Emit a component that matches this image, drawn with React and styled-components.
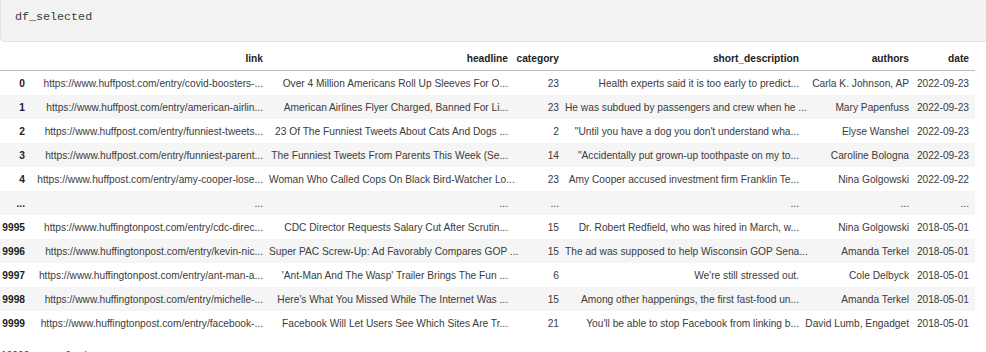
import styled, { createGlobalStyle } from "styled-components";

const GlobalStyle = createGlobalStyle`
  body {
    margin: 0;
    background: #ffffff;
    overflow: hidden;
    font-family: "Liberation Sans", Arial, sans-serif;
  }
`;

const CodeCell = styled.div`
  height: 42px;
  background-color: #f3f3f3;
  border-left: 1px solid #e2e2e2;
  border-bottom: 1px solid #e2e2e2;
  border-bottom-left-radius: 5px;
  box-sizing: border-box;
  padding: 10px 0 0 14px;
`;

const Code = styled.pre`
  margin: 0;
  font-family: "Liberation Mono", "DejaVu Sans Mono", monospace;
  font-size: 11.7px;
  line-height: 14px;
  color: #3b3b3b;
`;

const Output = styled.div`
  padding-top: 5px;
`;

const Table = styled.table`
  border-collapse: collapse;
  table-layout: fixed;
  width: 975px;
  font-size: 10.2px;
  color: #3b3b3b;
`;

const HeadCell = styled.th`
  height: 23px;
  padding: 0 6px 0 0;
  text-align: right;
  font-weight: 700;
  color: #222222;
  white-space: nowrap;
  border-bottom: 1px solid #bdbdbd;
`;

const Row = styled.tr`
  background-color: ${(p) => (p.$striped ? "#f5f5f5" : "#ffffff")};
`;

const IndexCell = styled.th`
  height: 24px;
  padding: 0 6px 0 0;
  text-align: right;
  font-weight: 700;
  color: #222222;
  white-space: nowrap;
`;

const Cell = styled.td`
  height: 24px;
  padding: 0 6px 0 0;
  text-align: right;
  white-space: nowrap;
`;

const Footer = styled.p`
  margin: 15px 0 0 1px;
  font-size: 10.2px;
  color: #3b3b3b;
`;

const columns = [
  { name: "", width: 31 },
  { name: "link", width: 238 },
  { name: "headline", width: 245 },
  { name: "category", width: 51 },
  { name: "short_description", width: 240 },
  { name: "authors", width: 110 },
  { name: "date", width: 60 },
];

const rows = [
  ["0", "https://www.huffpost.com/entry/covid-boosters-...", "Over 4 Million Americans Roll Up Sleeves For O...", "23", "Health experts said it is too early to predict...", "Carla K. Johnson, AP", "2022-09-23"],
  ["1", "https://www.huffpost.com/entry/american-airlin...", "American Airlines Flyer Charged, Banned For Li...", "23", "He was subdued by passengers and crew when he ...", "Mary Papenfuss", "2022-09-23"],
  ["2", "https://www.huffpost.com/entry/funniest-tweets...", "23 Of The Funniest Tweets About Cats And Dogs ...", "2", "\"Until you have a dog you don't understand wha...", "Elyse Wanshel", "2022-09-23"],
  ["3", "https://www.huffpost.com/entry/funniest-parent...", "The Funniest Tweets From Parents This Week (Se...", "14", "\"Accidentally put grown-up toothpaste on my to...", "Caroline Bologna", "2022-09-23"],
  ["4", "https://www.huffpost.com/entry/amy-cooper-lose...", "Woman Who Called Cops On Black Bird-Watcher Lo...", "23", "Amy Cooper accused investment firm Franklin Te...", "Nina Golgowski", "2022-09-22"],
  ["...", "...", "...", "...", "...", "...", "..."],
  ["9995", "https://www.huffingtonpost.com/entry/cdc-direc...", "CDC Director Requests Salary Cut After Scrutin...", "15", "Dr. Robert Redfield, who was hired in March, w...", "Nina Golgowski", "2018-05-01"],
  ["9996", "https://www.huffingtonpost.com/entry/kevin-nic...", "Super PAC Screw-Up: Ad Favorably Compares GOP ...", "15", "The ad was supposed to help Wisconsin GOP Sena...", "Amanda Terkel", "2018-05-01"],
  ["9997", "https://www.huffingtonpost.com/entry/ant-man-a...", "'Ant-Man And The Wasp' Trailer Brings The Fun ...", "6", "We're still stressed out.", "Cole Delbyck", "2018-05-01"],
  ["9998", "https://www.huffingtonpost.com/entry/michelle-...", "Here's What You Missed While The Internet Was ...", "15", "Among other happenings, the first fast-food un...", "Amanda Terkel", "2018-05-01"],
  ["9999", "https://www.huffingtonpost.com/entry/facebook-...", "Facebook Will Let Users See Which Sites Are Tr...", "21", "You'll be able to stop Facebook from linking b...", "David Lumb, Engadget", "2018-05-01"],
];

export default function App() {
  return (
    <>
      <GlobalStyle />
      <CodeCell>
        <Code>df_selected</Code>
      </CodeCell>
      <Output>
        <Table>
          <colgroup>
            {columns.map((c) => (
              <col key={c.name || "index"} style={{ width: c.width }} />
            ))}
          </colgroup>
          <thead>
            <tr>
              {columns.map((c) => (
                <HeadCell key={c.name || "index"}>{c.name}</HeadCell>
              ))}
            </tr>
          </thead>
          <tbody>
            {rows.map(([idx, ...cells], i) => (
              <Row key={idx + i} $striped={i % 2 === 1}>
                <IndexCell>{idx}</IndexCell>
                {cells.map((v, j) => (
                  <Cell key={j}>{v}</Cell>
                ))}
              </Row>
            ))}
          </tbody>
        </Table>
        <Footer>10000 rows × 6 columns</Footer>
      </Output>
    </>
  );
}
